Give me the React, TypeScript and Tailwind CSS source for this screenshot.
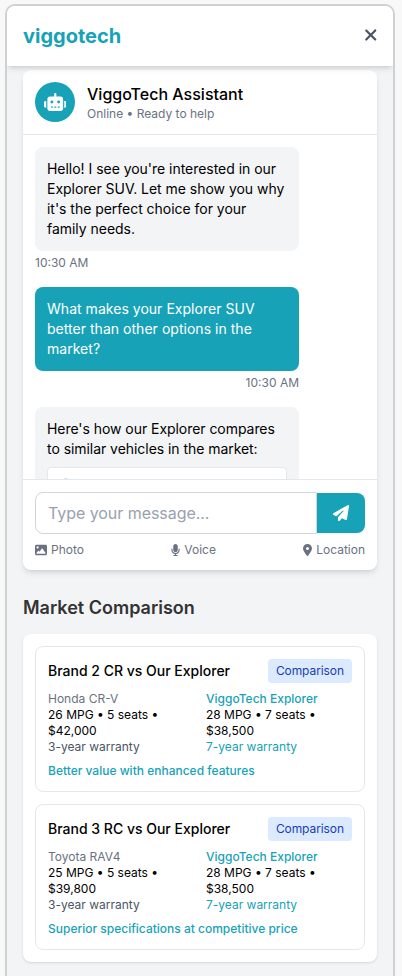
import { useState } from "react";
import {
  FaImage,
  FaLocationDot,
  FaMicrophone,
  FaPaperPlane,
  FaRobot,
  FaShieldHalved,
  FaXmark,
} from "react-icons/fa6";

const messages = [
  {
    from: "bot",
    time: "10:30 AM",
    text: "Hello! I see you're interested in our Explorer SUV. Let me show you why it's the perfect choice for your family needs.",
  },
  {
    from: "user",
    time: "10:30 AM",
    text: "What makes your Explorer SUV better than other options in the market?",
  },
];

const comparisons = [
  {
    title: "Brand 2 CR vs Our Explorer",
    rival: "Honda CR-V",
    rivalSpecs: "26 MPG • 5 seats • $42,000",
    note: "Better value with enhanced features",
  },
  {
    title: "Brand 3 RC vs Our Explorer",
    rival: "Toyota RAV4",
    rivalSpecs: "25 MPG • 5 seats • $39,800",
    note: "Superior specifications at competitive price",
  },
];

function Header() {
  return (
    <header className="relative z-10 flex h-[60px] shrink-0 items-center justify-between bg-white px-4 shadow-md">
      <h1 className="text-xl leading-7 font-bold text-[#17a2b8]">viggotech</h1>
      <button className="pb-0.5 text-gray-600" aria-label="Close">
        <FaXmark className="h-[18px] w-[13.5px]" />
      </button>
    </header>
  );
}

function Message({ from, text, time }: { from: string; text: string; time: string }) {
  const isUser = from === "user";
  return (
    <div className="mb-4 w-4/5">
      <div
        className={
          isUser
            ? "rounded-lg bg-[#17a2b8] p-3 text-sm tracking-[0.03px] text-white"
            : "rounded-lg bg-gray-100 p-3 text-sm tracking-[-0.03px]"
        }
      >
        {text}
      </div>
      <p className={isUser ? "mt-1 text-right text-xs text-gray-500" : "mt-1 text-xs text-gray-500"}>
        {time}
      </p>
    </div>
  );
}

function Chat() {
  const [draft, setDraft] = useState("");

  return (
    <section className="rounded-lg bg-white shadow-md">
      <div className="flex items-center gap-3 border-b border-gray-200 p-3">
        <div className="flex size-10 items-center justify-center rounded-full bg-[#17a2b8] text-white">
          <FaRobot className="h-[18px] w-[22.5px]" />
        </div>
        <div>
          <h2 className="text-base font-medium">ViggoTech Assistant</h2>
          <p className="text-xs text-gray-500">Online • Ready to help</p>
        </div>
      </div>

      <div className="h-[344px] overflow-hidden p-3">
        {messages.map((m) => (
          <Message key={m.from} {...m} />
        ))}
        <div className="w-4/5 rounded-lg bg-gray-100 p-3 text-sm tracking-[-0.05px]">
          <p>Here's how our Explorer compares to similar vehicles in the market:</p>
          <div className="mt-2 h-24 rounded border border-gray-200 bg-white px-3 py-2.5">
            <FaShieldHalved className="size-3 text-[#17a2b8] opacity-30" />
          </div>
        </div>
      </div>

      <div className="border-t border-gray-200 p-3">
        <div className="flex items-center">
          <input
            value={draft}
            onChange={(e) => setDraft(e.target.value)}
            placeholder="Type your message..."
            className="h-[42px] min-w-0 flex-1 rounded-l-lg border border-gray-300 px-3 py-2 text-base tracking-[-0.05px] placeholder:text-gray-400"
          />
          <button
            className="flex h-10 w-12 items-center justify-center rounded-r-lg bg-[#17a2b8] text-white"
            aria-label="Send"
          >
            <FaPaperPlane className="size-4" />
          </button>
        </div>
        <div className="mt-2 flex justify-between text-xs text-gray-500">
          <button className="flex items-center gap-1">
            <FaImage className="size-3" />
            Photo
          </button>
          <button className="flex items-center gap-1">
            <FaMicrophone className="h-3 w-[9px]" />
            Voice
          </button>
          <button className="flex items-center gap-1">
            <FaLocationDot className="h-3 w-[9px]" />
            Location
          </button>
        </div>
      </div>
    </section>
  );
}

function ComparisonCard({ title, rival, rivalSpecs, note }: (typeof comparisons)[number]) {
  return (
    <div className="rounded-lg border border-gray-200 p-3">
      <div className="mb-2 flex items-center justify-between">
        <h3 className="text-sm font-medium">{title}</h3>
        <span className="rounded bg-blue-100 px-2 py-1 text-xs tracking-[-0.08px] text-blue-800">
          Comparison
        </span>
      </div>
      <div className="grid grid-cols-2 gap-3 text-xs">
        <div>
          <p className="text-gray-500">{rival}</p>
          <p>{rivalSpecs}</p>
          <p className="text-gray-600">3-year warranty</p>
        </div>
        <div>
          <p className="font-medium text-[#17a2b8]">ViggoTech Explorer</p>
          <p>28 MPG • 7 seats • $38,500</p>
          <p className="text-[#17a2b8]">7-year warranty</p>
        </div>
      </div>
      <p className="mt-2 text-xs font-medium text-[#17a2b8]">{note}</p>
    </div>
  );
}

export default function App() {
  return (
    <div className="h-screen overflow-hidden bg-[#f8f8f8] pt-1 pr-[7px] pl-[5px] font-['Inter',sans-serif] text-black">
      <div className="flex h-[1000px] flex-col overflow-hidden rounded-[10px] border-2 border-[#cfd0d2] bg-gray-100">
        <Header />
        <main className="px-4 pt-1">
          <Chat />
          <h2 className="mt-6 mb-3 text-lg leading-7 font-semibold text-[#333]">
            Market Comparison
          </h2>
          <section className="space-y-3 rounded-lg bg-white p-3 shadow-sm">
            {comparisons.map((c) => (
              <ComparisonCard key={c.title} {...c} />
            ))}
          </section>
        </main>
      </div>
    </div>
  );
}
